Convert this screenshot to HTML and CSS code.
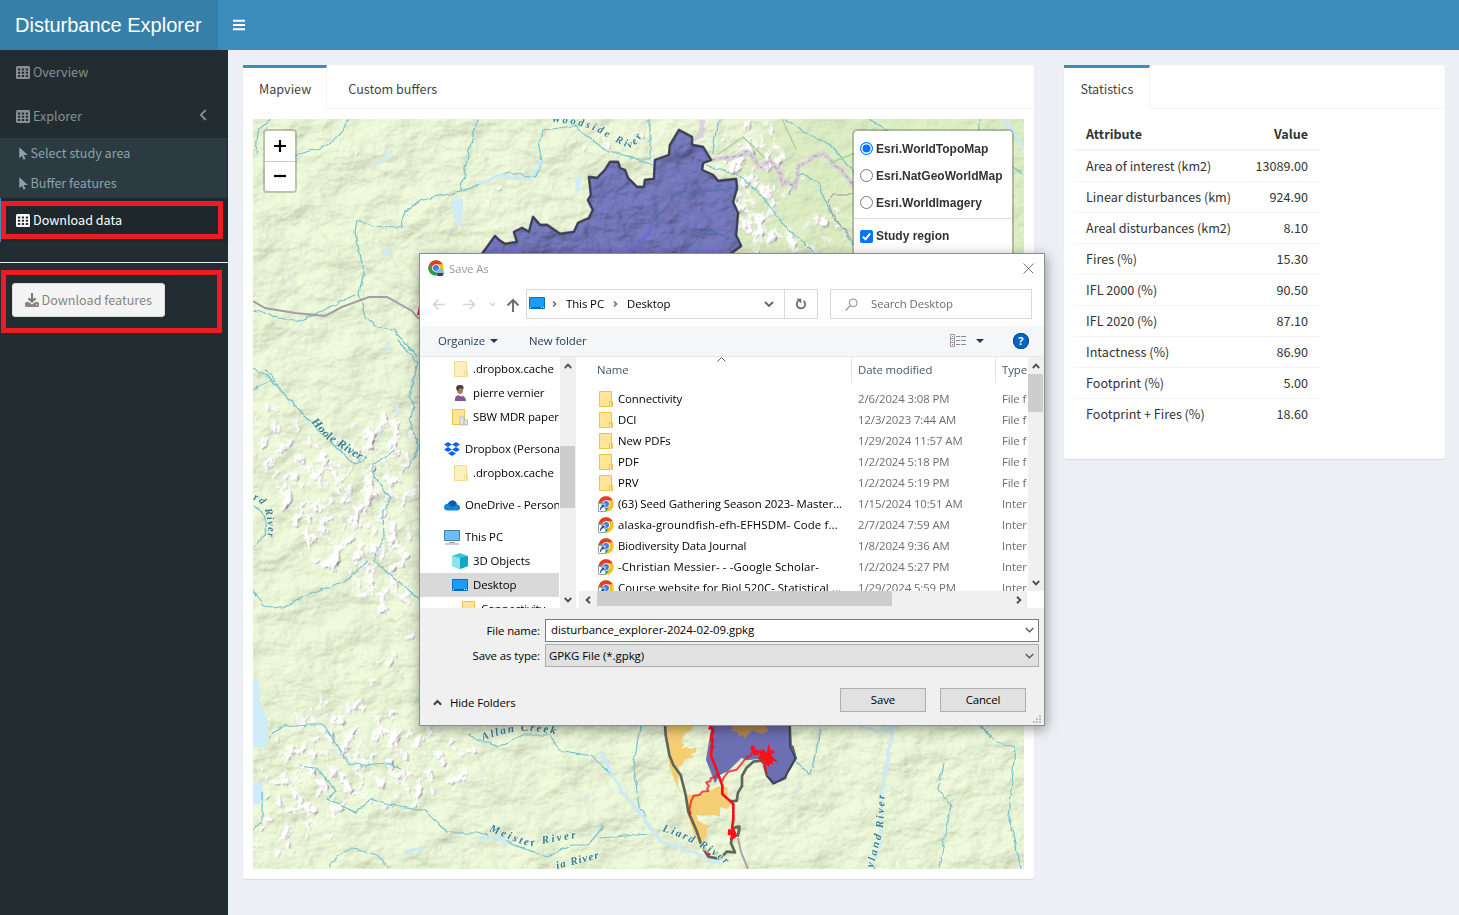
FILE: index.html
```html
<!DOCTYPE html>
<html lang="en">
<head>
<meta charset="utf-8">
<title>Disturbance Explorer</title>
<link rel="stylesheet" href="styles.css">
</head>
<body>
<svg class="defs" width="0" height="0">
  <defs>
    <symbol id="i-table" viewBox="0 0 14 13"><rect width="14" height="13" rx="1.5" fill="currentColor"/><path class="gridholes" d="M1.900 2.400h2.300v2H1.900zM5.800 2.400h2.300v2H5.800zM9.800 2.400h2.300v2H9.800zM1.900 5.700h2.300v2H1.900zM5.800 5.700h2.300v2H5.800zM9.800 5.700h2.300v2H9.800zM1.900 9h2.300v2H1.900zM5.800 9h2.300v2H5.800zM9.800 9h2.300v2H9.800z"/></symbol>
    <symbol id="i-pointer" viewBox="0 0 9 13"><path d="M.3.3v11l2.6-2.5 1.7 3.9 1.9-.8-1.7-3.8h4z" fill="currentColor"/></symbol>
    <symbol id="i-folder" viewBox="0 0 14 16"><path d="M.5.5h12v10h1v5H.5z" fill="#ffe594" stroke="#ecc44c"/><path d="M10.5 15.500v-5h2v5" fill="#ffefb8" stroke="#ecc44c"/></symbol>
    <symbol id="i-chrome" viewBox="0 0 48 48"><circle cx="24" cy="24" r="23" fill="#fbc116"/><path d="M4 12.500A23 23 0 0 0 24 47L34 30 24 24 14 30z" fill="#23a14a"/><path d="M4 12.500A23 23 0 0 1 44 12.500H24L14 29z" fill="#e53a2e"/><circle cx="24" cy="24" r="11.500" fill="#fff"/><circle cx="24" cy="24" r="9" fill="#3b7ded"/></symbol>
    <symbol id="i-link" viewBox="0 0 16 16"><use href="#i-chrome" width="16" height="16"/><path d="M.5 7.500h7v8h-7z" fill="#fff" stroke="#9aa3ad"/><path d="M2 14c0-3 1-4 2-4l-1-1.500h3.500V12L5.300 11C4 11.500 3 12.500 3 14z" fill="#1f56a5"/></symbol>
    <symbol id="i-desktop" viewBox="0 0 16 12"><path d="M.5.500h15v11H.5z" fill="#1e9cf5" stroke="#0a6fc0"/><path d="M1 10.500h14" stroke="#0a5c9f"/><path d="M1 10.500h1M12 10.500h1M14 10.500h1" stroke="#fff"/></symbol>
    <symbol id="i-up" viewBox="0 0 8 6"><path d="M.8 5 4 1.700 7.200 5" fill="none" stroke="currentColor" stroke-width="1.900"/></symbol>
    <symbol id="i-down" viewBox="0 0 10 6"><path d="M.8.800 5 5 9.200.800" fill="none" stroke="currentColor" stroke-width="1.400"/></symbol>
  </defs>
</svg>

<header class="topbar">
  <div class="logo">Disturbance Explorer</div>
  <div class="burger"><svg width="14" height="12"><path d="M1 1.800h12M1 6h12M1 10.200h12" stroke="#fff" stroke-width="2"/></svg></div>
</header>

<div class="wrap">
  <aside class="sidebar">
    <a class="item"><svg class="ic"><use href="#i-table"/></svg>Overview</a>
    <a class="item"><svg class="ic"><use href="#i-table"/></svg>Explorer<svg class="caret" width="8" height="12"><path d="M6.800 0 1.800 5l5 5" fill="none" stroke="currentColor" stroke-width="1.800"/></svg></a>
    <div class="sub">
      <a><svg class="ptr"><use href="#i-pointer"/></svg>Select study area</a>
      <a><svg class="ptr"><use href="#i-pointer"/></svg>Buffer features</a>
    </div>
    <a class="item active"><svg class="ic"><use href="#i-table"/></svg>Download data</a>
    <hr>
    <button class="dl"><svg width="14" height="14" viewBox="0 0 14 14"><path d="M7 0v8M3.500 5.200 7 8.700l3.500-3.500" fill="none" stroke="#777" stroke-width="2"/><path d="M1.500 9h2.200L7 11.500 10.300 9h2.200q1.500 0 1.500 1.500v2q0 1.500-1.500 1.500h-11Q0 14 0 12.500v-2Q0 9 1.500 9z" fill="#858585"/><circle cx="11.500" cy="11.500" r=".7" fill="#eee"/></svg>Download features</button>
    <div class="mark mark1"></div>
    <div class="mark mark2"></div>
  </aside>

  <main class="content">
    <section class="card mapcard">
      <nav class="tabs"><span class="tab on">Mapview</span><span class="tab">Custom buffers</span></nav>
      <div class="map">
        <svg class="mapsvg" viewBox="253 119 771 750">
          <defs>
            <filter id="relief" x="0" y="0" width="100%" height="100%" color-interpolation-filters="sRGB">
              <feTurbulence type="fractalNoise" baseFrequency=".022 .03" numOctaves="5" seed="8"/>
              <feColorMatrix values="0 0 0 0 0 0 0 0 0 0 0 0 0 0 0 1 0 0 0 0" result="h"/>
              <feDiffuseLighting in="h" surfaceScale="4" diffuseConstant="1.065" lighting-color="#eaf5d6"><feDistantLight azimuth="225" elevation="70"/></feDiffuseLighting>
            </filter>
            <filter id="hills" x="0" y="0" width="100%" height="100%" color-interpolation-filters="sRGB">
              <feTurbulence type="fractalNoise" baseFrequency=".035 .045" numOctaves="4" seed="5"/>
              <feColorMatrix values="0 0 0 0 0 0 0 0 0 0 0 0 0 0 0 1 0 0 0 0" result="h"/>
              <feDiffuseLighting in="h" surfaceScale="4" diffuseConstant="1.060" lighting-color="#7678bd"><feDistantLight azimuth="225" elevation="68"/></feDiffuseLighting>
            </filter>
            <filter id="snow" x="-5%" y="-5%" width="110%" height="110%" color-interpolation-filters="sRGB">
              <feGaussianBlur in="SourceAlpha" stdDeviation="12" result="b"/>
              <feTurbulence type="fractalNoise" baseFrequency=".085 .07" numOctaves="4" seed="21" result="n"/>
              <feColorMatrix in="n" values="0 0 0 0 0 0 0 0 0 0 0 0 0 0 0 1 0 0 0 0" result="h"/>
              <feComposite in="b" in2="h" operator="arithmetic" k1="0" k2=".45" k3="1" k4="-.86" result="m"/>
              <feComponentTransfer in="m" result="mask"><feFuncA type="linear" slope="6"/></feComponentTransfer>
              <feDiffuseLighting in="h" surfaceScale="3.200" diffuseConstant="1.160" lighting-color="#fffcf8" result="l"><feDistantLight azimuth="225" elevation="62"/></feDiffuseLighting>
              <feComposite in="l" in2="mask" operator="in"/>
            </filter>
            <filter id="rough" x="-5%" y="-5%" width="110%" height="110%"><feTurbulence type="fractalNoise" baseFrequency=".11" numOctaves="2" seed="3"/><feDisplacementMap in="SourceGraphic" scale="5" xChannelSelector="R" yChannelSelector="G"/></filter>
            <clipPath id="region"><use href="#upper"/></clipPath>
          </defs>
          <rect x="253" y="119" width="771" height="750" fill="#e6f2d3"/>
          <rect x="253" y="119" width="771" height="750" filter="url(#relief)" opacity=".65"/>
          <path d="M780 119h244v150H740l-20-90z" fill="#c3dda0" opacity=".35"/>
          <g filter="url(#snow)">
            <path d="M253 390l35 10 30 40 50-30 52-10v240l-60-30-60-50-47-90z" opacity=".9"/>
            <path d="M290 700l80-10 60 30 50 20-10 60-70 10-90 35-50 34h-7v-80z" opacity=".85"/>
            <path d="M700 185l45 0 60 45 35-40 15 63H700z M740 119h40l20 60-30 30-60-35z"/>
            <path d="M560 160l30-40h100v25l-40 20-50 10z M480 170h35v70h-40z M320 130h70v50h-70z" opacity=".6"/>
            <path d="M360 650l60-20v70l-60-20z M830 740h20v60h-20z M935 770h25v60h-25z M410 845h80v24h-80z" opacity=".75"/>
            <path d="M390 240h45v55h-45z M270 220h50v30h-50z" opacity=".5"/>
          </g>
          <g fill="#cfecfb">
            <path d="M253 679l6 2 1 20 8 20-2 26-13 0zM253 782h8l4 15-6 8-6-2z"/>
            <path d="M455 197l8 3-2 27-5-4-4-16zM374 165l19-17-2 7-16 12zM575 177h6l-1 12-4 6z"/>
            <path d="M382 253l10-10-4 12-6 3zM396 405l4 4-2 8-3-5zM378 442l6-12-1 8zM480 768l5 3 2 6zM586 795l4 3-2 6z"/>
            <path d="M390 680l4-4 3 2zM780 788l8-4-4 6zM795 790l8-8-5 10zM386 346l4-3v8l-3 1zM294 241l5 4-4-1zM288 276l10 1-7 2zM300 397l6-1-5 3zM352 370l3-2-2 2zM334 750l6 5-3 0zM297 667l4 4-1 4z"/>
          </g>
          <g filter="url(#rough)" fill="none" stroke-linejoin="round">
            <g stroke="#76c2cf" stroke-width="1.200">
              <path d="M349 119q-12 24-29 29l-25 7M478 119q-8 25-12 45l-6 28-26 5-15 4-13 10-5 16-30-1-14-6-2 12 9 40-5 20 6 25 10 9 20 6 22 24M253 310l25 8 22 3 40-19 18-8M460 192l20-8 30-12 25 6 7-15-4-22 6-11 30-4 30 23 26 8 35 12M253 368l13 7 40 42 15 16 35 32 10-9M398 340l20 23-9 32 6 15-6 9 9 25-2 12-12 16M396 450l-23 14 0 12 18 22-8 14 1 25-10 23 32 28 14 11M368 561l-25 22-38 13-22 12-20-2-10-16M253 505q18 10 12 30l-12 15"/>
              <path d="M268 737l13-10 30-2 13 0 24 38 15 2 25-2 13 5M300 766l16 2 20 23-9 8 28 13 16-13 17 6 38 6 20 22 32 0 24 7 45 17 25-12 16 0 15-18M468 735l30 12 25-12 27 0 9 15 32 6 22 20M328 869q10-20 25-20l25 6 10 14M253 830l9-8v-30"/>
              <path d="M600 838l50-4M641 725l-3 12-4 30 5 40 7 10M790 755l20 20 6-25 5-20M980 725l14 15 21 8-6 70 12 50M939 869l12-64-12-15 5-27"/>
              <path d="M719 119q-5 20-6 35M785 119l25 16 20 10 43 50M870 119l40 26M980 119l-5 25 48 30M706 165l35 12 20 18 23 30 33 30M790 195q5-35 28-12l10 25 30 42M650 119v40l-20 0M270 119l-12 12-2 22M253 390l22-10-10-10"/>
            </g>
            <g stroke="#cbe9f6" stroke-width="3.200">
              <path d="M480 184l20-8 30 3 12-18M600 750l20 40 25 30 15 20 40 15 20 8M893 725l-5 35-5 25-3 60-8 24M1004 119l20 30M480 838l18-1 10 8M405 853l20-6M860 727l20 5 12-5"/>
            </g>
            <path d="M703 119l-2 15-8 6M711 160l25-3 12-5 12 15 10-7 12 15v12l5-6 8 8 3-23 25-13 25 25 15 25" stroke="#d5c9d8" stroke-width="5" opacity=".8"/>
            <path d="M711 160l25-3 12-5 12 15 10-7 12 15v12l5-6 8 8 3-23 25-13 25 25 15 25" stroke="#a995b0" stroke-width="1" stroke-dasharray="4 3"/>
            <path d="M853 240l-20-24-5-14 5-8 22 0" stroke="#9a93a5" stroke-width="1"/>
          </g>
          <path d="M717 155l26-18 22 21M782 119l14 30M830 163l30-12" fill="none" stroke="#b3cf9c" stroke-width="1.500"/>
          <path d="M253 301l12 7 30 5 30 3 17-9 27-10h18l25 14 7 8" fill="none" stroke="#a39ea6" stroke-width="2"/>
          <path d="M738 838l3 14 7 17" fill="none" stroke="#aaa4ab" stroke-width="2"/>
          <path d="M417 315l3-13v13z" fill="#d72727"/>

          <path id="upper" d="M482 254l13-18 4 4 6 4 12-2-3-10 8-4 7 4 4-15 7 8h7l13 9 14-2 4-9 11-5 4-8-5-10 3-5-2-18 8 1 8-8 5-8h8l2 6 5 2 3 8 9 9 7 0 1-7 9-1 1-19 14-5 1-10 9-15 13 7v8l11 2 8 13-8 3-1 7 11 5 5 6 18-2 1 9-4 14 5 11-2 22 5 11-11 8z" fill="#7072b6"/>
          <g clip-path="url(#region)"><rect class="shade" x="480" y="125" width="265" height="135" filter="url(#hills)"/><path d="M654 222l8-10 12-16 8-4 24 0 32-5M683 253l15-15 15-7 25 11" fill="none" stroke="#4e75b4" stroke-width="1.200"/><path d="M630 253l22-24" stroke="#6a6cd0" stroke-width="3"/></g>
          <path class="outline" d="M482 254l13-18 4 4 6 4 12-2-3-10 8-4 7 4 4-15 7 8h7l13 9 14-2 4-9 11-5 4-8-5-10 3-5-2-18 8 1 8-8 5-8h8l2 6 5 2 3 8 9 9 7 0 1-7 9-1 1-19 14-5 1-10 9-15 13 7v8l11 2 8 13-8 3-1 7 11 5 5 6 18-2 1 9-4 14 5 11-2 22 5 11-11 8"/>
          <path class="outline in" d="M482 254l13-18 4 4 6 4 12-2-3-10 8-4 7 4 4-15 7 8h7l13 9 14-2 4-9 11-5 4-8-5-10 3-5-2-18 8 1 8-8 5-8h8l2 6 5 2 3 8 9 9 7 0 1-7 9-1 1-19 14-5 1-10 9-15 13 7v8l11 2 8 13-8 3-1 7 11 5 5 6 18-2 1 9-4 14 5 11-2 22 5 11-11 8"/>

          <g transform="translate(600 715) scale(.33333)">
            <path d="M335 28h233l2 65 17 38-15 30-17 28-34 16-21-25-8-30-17-18-35 4 -15-8-40 40-25 12-15 25-15-40-12-30z" fill="#6d6fb3"/>
            <path d="M388 28h110l8 20-20 8-30-10-20 24-12-10-8 5-2-15-22-3 8-7z" fill="#b28552"/>
            <path d="M195 28h85l-5 18-20 10-12 22 10 12-8 10 15-4 10 6 20-5-2 15-15 5 8 10-25 6-10 18-10 3-2 60 15 26-15-20-26-65-5-80zM257 240l50-3 25-10 20-12h30l2 25-6 5 12 22-5 15-25-5v28l-20-5-30 2-20-2 2 15 15 10 15 5-2 35-12 15 20 35-10 5-35-60-20-60z" fill="#f5cd73"/>
            <path d="M195 28l2 32 11 60 12 30 22 30 15 60 8 50 25 58 15 45 20 32 35 7 20-22 25 2-12-27 7-45 18-5-5 30M390 258l20 0 4-25 12-20 0-30 14-25 20-18 30-4M492 150l8 30 20 25 35-15 5-15 27-45-10-35-5 0-3-67" fill="none" stroke="#5f6659" stroke-width="8" stroke-linejoin="round"/>
            <path d="M500 183l22 22 33-18 31-57-17-37v-65" fill="none" stroke="#35357f" stroke-width="4"/>
            <g fill="none" stroke="#f50f18" stroke-linejoin="round">
              <path d="M328 28l12 20-6 14 3 20-4 40 16 40 18 50 0 25 33 30 0 45-4 30" stroke-width="8"/>
              <path d="M325 40l15 0M330 75l12 0M332 96l11 0" stroke-width="7"/>
              <path d="M355 177l-12 10-10 2-2 10-12 3 8 12-6 6 4 8-18 2-8 10-18 2-8 18-5 25 5 12M367 200l4-12 14-18 25-6 15-18 13-17 15-8 8-25 8 15 20-5 5 15 30-10M500 175l-4-20-20-30" stroke-width="6" opacity=".75"/>
              <path d="M320 408l10 12" stroke-width="7"/>
            </g>
            <path d="M450 95l12-5 2 15 22 3 4-5 10 12 6-30 5 20 12 0-10 12 2 5 20 20-18-5 2 12-10-3-2 9-13-8-5-12-15-6 8-12-20 5zM384 343l20 0 8 20-10 8-13 5 4-15-10 0z" fill="#fb1118"/>
            <path d="M400 340q20-14 18 8l-5 12" fill="none" stroke="#66695f" stroke-width="7"/>
          </g>
          <g class="maplabels">
            <path id="t1" d="M551 122q32 1 54 14t27 11q8-3 16-24v-20" fill="none"/><text font-size="10.500" letter-spacing="2.600"><textPath href="#t1">Woodside River</textPath></text>
            <path id="t2" d="M311 422l14 16 33 21 20 12" fill="none"/><text font-size="12" letter-spacing=".3"><textPath href="#t2">Hoole River</textPath></text>
            <path id="t3" d="M253 500q18 2 14 44l-2 20" fill="none"/><text font-size="10.500" letter-spacing="1.200"><textPath href="#t3">rd River</textPath></text>
            <path id="t4" d="M483 741q38-17 78-5l20 6" fill="none"/><text font-size="11" letter-spacing="1.900"><textPath href="#t4">Allan Creek</textPath></text>
            <path id="t5" d="M489 831l22 9q18 8 25 5l40-7 20 0" fill="none"/><text font-size="11" letter-spacing="2.400"><textPath href="#t5">Meister River</textPath></text>
            <path id="t6" d="M557 869l47-12 20-5" fill="none"/><text font-size="11" letter-spacing="1.100"><textPath href="#t6">ia River</textPath></text>
            <path id="t7" d="M662 831q38 12 64 34l20 20" fill="none"/><text font-size="11" letter-spacing="2"><textPath href="#t7">Liard River</textPath></text>
            <path id="t8" d="M873 868l10-38 3-60" fill="none"/><text font-size="11" letter-spacing="2.200"><textPath href="#t8">yland River</textPath></text>
          </g>
        </svg>
        <div class="zoomctl"><span><svg width="12" height="12"><path d="M6 0v12M0 6h12" stroke="#000" stroke-width="2.200"/></svg></span><span><svg width="12" height="12"><path d="M0 5h12" stroke="#000" stroke-width="2.200"/></svg></span></div>
        <div class="layers">
          <label><i class="radio sel"></i>Esri.WorldTopoMap</label>
          <label><i class="radio"></i>Esri.NatGeoWorldMap</label>
          <label><i class="radio"></i>Esri.WorldImagery</label>
          <label class="ov"><svg width="13" height="13"><rect width="13" height="13" rx="2" fill="#0075ff"/><path d="M2.800 6.600l2.700 2.800 4.700-6" fill="none" stroke="#fff" stroke-width="1.900"/></svg>Study region</label>
        </div>
      </div>
    </section>
    <section class="card statcard">
      <nav class="tabs"><span class="tab on">Statistics</span></nav>
      <table class="stats">
        <thead><tr><th>Attribute</th><th>Value</th></tr></thead>
        <tbody>
        <tr><td>Area of interest (km2)</td><td>13089.00</td></tr>
        <tr><td>Linear disturbances (km)</td><td>924.90</td></tr>
        <tr><td>Areal disturbances (km2)</td><td>8.10</td></tr>
        <tr><td>Fires (%)</td><td>15.30</td></tr>
        <tr><td>IFL 2000 (%)</td><td>90.50</td></tr>
        <tr><td>IFL 2020 (%)</td><td>87.10</td></tr>
        <tr><td>Intactness (%)</td><td>86.90</td></tr>
        <tr><td>Footprint (%)</td><td>5.00</td></tr>
        <tr><td>Footprint + Fires (%)</td><td>18.60</td></tr>
        </tbody>
      </table>
    </section>
  </main>
</div>

<div class="dialog">
  <div class="dtitle">
    <svg width="17" height="17" viewBox="0 0 17 17"><use href="#i-chrome" width="16" height="16"/><circle cx="12" cy="12.500" r="4" fill="#8db8d8"/><path d="M8.500 13h7l-1 3h-5z" fill="#4a4433"/></svg>
    <span>Save As</span>
    <svg class="close" width="11" height="11"><path d="M.5.500l10 10M10.500.500l-10 10" stroke="#777" stroke-width="1"/></svg>
  </div>
  <div class="dnav">
    <svg class="arrows" width="88" height="16"><g fill="none" stroke="#d4d4d4" stroke-width="1.500"><path d="M1.500 7.500H13M6.500 2.500l-5 5 5 5M31 7.500h11.500M37.500 2.500l5 5-5 5"/><path d="M58 6l2.500 2.500L63 6"/></g><path d="M81 15V3M75.500 8.500 81 3 86.500 8.500" fill="none" stroke="#707070" stroke-width="2"/></svg>
    <div class="addr">
      <svg class="desk" width="16" height="12"><use href="#i-desktop"/></svg>
      <svg class="sep" width="5" height="8"><path d="M1 1.500 3.500 4 1 6.500" fill="none" stroke="#666" stroke-width="1.500"/></svg>
      <span>This PC</span>
      <svg class="sep" width="5" height="8"><path d="M1 1.500 3.500 4 1 6.500" fill="none" stroke="#666" stroke-width="1.500"/></svg>
      <span>Desktop</span>
      <svg class="drop" width="10" height="6"><path d="M1 1l4 4 4-4" fill="none" stroke="#666" stroke-width="1.900"/></svg>
    </div>
    <div class="reload"><svg width="12" height="12"><path d="M3.300 3A4.200 4.200 0 1 0 8.500 2.900" fill="none" stroke="#666" stroke-width="1.700"/><path d="M1.500.800h4.700v4.700z" fill="#666"/></svg></div>
    <div class="search"><svg width="13" height="13"><circle cx="8.200" cy="4.800" r="3.900" fill="none" stroke="#888"/><path d="M5.400 7.600.700 12.300" stroke="#888" stroke-width="1.200"/></svg>Search Desktop</div>
  </div>
  <div class="dtool">
    <span>Organize</span><i class="tri"></i><span class="newf">New folder</span>
    <svg class="view" width="17" height="14"><path d="M.5.500h4v12h-4zM.5 4.500h4M.5 8.500h4" fill="#fff" stroke="#999"/><path d="M2 2.500h1M2 6.500h1" stroke="#3b83c9"/><path d="M2 10.500h1" stroke="#d33"/><path d="M6 2.500h4m1 0h5M6 6.500h4m1 0h5M6 10.500h4m1 0h5" stroke="#8b8b8b"/></svg>
    <i class="tri"></i>
    <span class="help">?</span>
  </div>
  <div class="dmain">
    <div class="tree">
      <div class="node l2"><svg class="fold pale"><use href="#i-folder"/></svg>.dropbox.cache</div>
      <div class="node l2"><svg class="pic" viewBox="0 0 16 16"><path d="M3 16q-1-6 5-6 6 1 6 6z" fill="#87578c"/><path d="M5 9l4-1 1 4z" fill="#fff"/><ellipse cx="8" cy="5" rx="3" ry="4" fill="#a77b5b"/><path d="M4.500 5Q3 0 8 0q4 0 3.500 4l-4-1-1.500 3z" fill="#443d3b"/></svg>pierre vernier</div>
      <div class="node l2"><svg class="pic" viewBox="0 0 16 16"><path d="M.5.500h12v15H.5z" fill="#ffe594" stroke="#ecc44c"/><path d="M8 8h4v8H8zM12 11h3.500v5H12z" fill="#e6e6e6" stroke="#bbb"/></svg>SBW MDR paper</div>
      <div class="node l0 gap"><svg class="pic" viewBox="0 0 16 14"><path d="M4 0l4 2.500L4 5 0 2.500zM12 0l4 2.500L12 5 8 2.500zM4 5l4 2.500L4 10 0 7.500zM12 5l4 2.500-4 2.500-4-2.500zM8 9l4 2.500L8 14l-4-2.500z" fill="#0a62f5"/></svg>Dropbox (Personal)</div>
      <div class="node l2"><svg class="fold pale"><use href="#i-folder"/></svg>.dropbox.cache</div>
      <div class="node l0 gap"><svg class="pic" viewBox="0 0 16 12"><path d="M3 11.500Q0 11 0 8t4-3.500Q6 1 9 1.500t4 4Q16 6 16 8.700t-3 2.800z" fill="#1583d8"/><path d="M4 4.500Q6 1 9 1.500t4 4L8 8z" fill="#0b5cad"/></svg>OneDrive - Personal</div>
      <div class="node l0 gap"><svg class="pic" viewBox="0 0 16 16"><path d="M.5 1.500h15v10H.5z" fill="#69c0f7" stroke="#4a7ba5"/><path d="M5 13.500h6M1 15h14" stroke="#8ba1b3"/></svg>This PC</div>
      <div class="node l1"><svg class="pic" viewBox="0 0 16 16"><path d="M0 3l8-3 8 3v10l-8 3-8-3z" fill="#37c3d8"/><path d="M0 3l8 2v11l-8-3z" fill="#8be3ec"/><path d="M8 5l8-2v10l-8 3z" fill="#0ca9c4"/></svg>3D Objects</div>
      <div class="node l1 cur"><svg class="deskic"><use href="#i-desktop"/></svg>Desktop</div>
      <div class="node l3"><svg class="fold"><use href="#i-folder"/></svg>Connectivity</div>
    </div>
    <div class="vs vs1"><svg class="up"><use href="#i-up"/></svg><i></i><svg class="dn"><use href="#i-up"/></svg></div>
    <div class="pane">
      <div class="files">
        <div class="list">
          <div class="lh"><b>Name</b><b>Date modified</b><b>Type</b><svg width="9" height="5"><path d="M.5 4.500l4-4 4 4" fill="none" stroke="#666"/></svg></div>
          <div class="row"><span><svg class="fold"><use href="#i-folder"/></svg>Connectivity</span><em>2/6/2024 3:08 PM</em><em>File f</em></div>
          <div class="row"><span><svg class="fold"><use href="#i-folder"/></svg>DCI</span><em>12/3/2023 7:44 AM</em><em>File f</em></div>
          <div class="row"><span><svg class="fold"><use href="#i-folder"/></svg>New PDFs</span><em>1/29/2024 11:57 AM</em><em>File f</em></div>
          <div class="row"><span><svg class="fold"><use href="#i-folder"/></svg>PDF</span><em>1/2/2024 5:18 PM</em><em>File f</em></div>
          <div class="row"><span><svg class="fold"><use href="#i-folder"/></svg>PRV</span><em>1/2/2024 5:19 PM</em><em>File f</em></div>
          <div class="row"><span><svg class="lnk"><use href="#i-link"/></svg>(63) Seed Gathering Season 2023- Master...</span><em>1/15/2024 10:51 AM</em><em>Inter</em></div>
          <div class="row wide"><span><svg class="lnk"><use href="#i-link"/></svg>alaska-groundfish-efh-EFHSDM- Code f...</span><em>2/7/2024 7:59 AM</em><em>Inter</em></div>
          <div class="row"><span><svg class="lnk"><use href="#i-link"/></svg>Biodiversity Data Journal</span><em>1/8/2024 9:36 AM</em><em>Inter</em></div>
          <div class="row wide"><span><svg class="lnk"><use href="#i-link"/></svg>-Christian Messier- - -Google Scholar-</span><em>1/2/2024 5:27 PM</em><em>Inter</em></div>
          <div class="row mid"><span><svg class="lnk"><use href="#i-link"/></svg>Course website for Biol 520C- Statistical ...</span><em>1/29/2024 5:59 PM</em><em>Inter</em></div>
        </div>
        <div class="vs vs2"><svg class="up"><use href="#i-up"/></svg><i></i><svg class="dn"><use href="#i-up"/></svg></div>
      </div>
      <div class="hs"><svg class="lf"><use href="#i-up"/></svg><i></i><svg class="rt"><use href="#i-up"/></svg></div>
    </div>
  </div>
  <div class="dfoot">
    <div class="frow"><label>File name:</label><div class="fld name">disturbance_explorer-2024-02-09.gpkg<svg><use href="#i-down"/></svg></div></div>
    <div class="frow"><label>Save as type:</label><div class="fld type">GPKG File (*.gpkg)<svg><use href="#i-down"/></svg></div></div>
    <div class="acts"><svg class="hid"><use href="#i-up"/></svg><span>Hide Folders</span><button>Save</button><button>Cancel</button></div>
    <svg class="grip" width="8" height="8"><path d="M6 0h2v2H6zM3 3h2v2H3zM6 3h2v2H6zM0 6h2v2H0zM3 6h2v2H3zM6 6h2v2H6z" fill="#bdbdbd"/></svg>
  </div>
</div>
</body>
</html>
```
FILE: styles.css
```css
* { box-sizing: border-box; }
body { margin: 0; width: 1459px; height: 915px; overflow: hidden; background: #ecf0f5; color: #333; font: 12.6px/20px "Noto Sans CJK SC", sans-serif; position: relative; }
svg { display: block; flex: none; overflow: visible; }
.defs { position: absolute; }
.topbar { height: 50px; display: flex; background: #3c8dbc; color: #fff; }
.logo { width: 218px; background: #367fa9; font: 20px/50px "Liberation Sans", sans-serif; padding-left: 15px; white-space: nowrap; }
.burger { padding: 19px 14px; }
.wrap { display: flex; height: 865px; }
.sidebar { width: 228px; background: #222d32; position: relative; color: #8a8f91; }
.item { display: flex; align-items: center; height: 44px; padding-left: 16px; gap: 3px; }
.ic { width: 14px; height: 13px; }
.gridholes { fill: #222d32; }
.caret { margin-left: auto; margin-right: 21px; margin-top: -1px; }
.sub { background: #2c3b41; margin-right: 1px; color: #8aa4af; }
.sub a { display: flex; align-items: center; height: 30px; padding-left: 19px; gap: 2.5px; }
.ptr { width: 9px; height: 13px; }
.active { background: #1e282c; color: #fff; box-shadow: inset 1px 0 #3c8dbc; }
hr { border: 0; height: 1px; background: #eee; margin: 20px 0; }
.dl { width: 153px; height: 34px; margin-left: 12px; border: 1px solid #ddd; border-radius: 3px; background: #f4f4f4; color: #858585; font: inherit; display: flex; align-items: center; gap: 2.5px; padding: 0 12px; white-space: nowrap; }
.mark { position: absolute; border: 5px solid #ed1c24; }
.mark1 { left: 1px; top: 151px; width: 222px; height: 38px; }
.mark2 { left: 1px; top: 220px; width: 221px; height: 63px; }
.content { flex: 1; padding: 15px 14px 0 15px; display: flex; gap: 30px; align-items: flex-start; }
.card { background: #fff; border-radius: 3px; box-shadow: 0 1px 1px rgba(0,0,0,.1); }
.mapcard { width: 791px; height: 814px; }
.statcard { width: 381px; height: 394px; }
.tabs { display: flex; height: 44px; border-bottom: 1px solid #f4f4f4; color: #444; }
.tab { height: 43px; padding: 14px 15px 0 21px; white-space: nowrap; }
.tab.on { height: 44px; border-top: 3px solid #3c8dbc; border-right: 1px solid #f4f4f4; background: #fff; padding: 11px 15px 0 16px; }
.statcard .tab.on { width: 86px; padding-left: 16.5px; }
.map { position: relative; margin: 10px; height: 750px; }
.mapsvg { width: 771px; height: 750px; overflow: hidden; }
.maplabels text { font-family: "Liberation Serif", serif; font-style: italic; fill: #367f92; stroke: #eef6e0; stroke-width: 1.5px; paint-order: stroke; font-weight: bold; }
.shade { opacity: .8; }
.outline { fill: none; stroke: #5a6052; stroke-width: 2.8px; stroke-linejoin: round; }
.outline.in { stroke: #333477; stroke-width: 1.3px; }
.zoomctl { position: absolute; left: 10px; top: 10px; width: 34px; height: 64px; border: 2px solid rgba(0,0,0,.2); border-radius: 4px; background-clip: padding-box; background-color: #fff; }
.zoomctl span { display: flex; align-items: center; justify-content: center; height: 30px; }
.zoomctl span + span { border-top: 1px solid #ccc; }
.layers { position: absolute; left: 599px; top: 10px; width: 162px; height: 170px; background-color: #fff; background-clip: padding-box; border: 2px solid rgba(0,0,0,.2); border-radius: 5px; font: bold 12px/27px "Liberation Sans", sans-serif; padding-top: 5px; }
.layers label { display: flex; align-items: center; height: 27px; padding-left: 6px; gap: 3px; }
.layers .ov { border-top: 1px solid #ddd; margin-top: 1px; height: 36px; }
.layers .ov svg { margin-top: -1px; }
.radio { width: 13px; height: 13px; margin-top: -2px; border: 1px solid #767676; border-radius: 50%; }
.radio.sel { border: 1.5px solid #0075ff; background: #0075ff; box-shadow: inset 0 0 0 1.5px #fff; }
.stats { border-collapse: collapse; margin: 9px 10px; width: 246px; }
.stats th, .stats td { text-align: left; padding: 5px 12px; height: 31px; border-bottom: 1px solid #f4f4f4; white-space: nowrap; line-height: 20px; }
.stats th { border-bottom-width: 2px; height: 32px; }
.stats th:last-child, .stats td:last-child { text-align: right; }
.stats tr:last-child td { border-bottom: 0; }
.dialog { position: absolute; left: 419px; top: 253px; width: 626px; height: 473px; border: 1px solid #8b8d8f; background: #fff; box-shadow: 1px 3px 12px rgba(0,0,0,.4); font: 11.4px/16px "Open Sans", sans-serif; letter-spacing: -.08px; color: #000; }
.dtitle { height: 29px; display: flex; align-items: center; gap: 4px; padding: 0 10px 0 8px; color: #999; }
.close { margin-left: auto; }
.dnav { height: 43px; display: flex; padding: 6px 12px 7px 12px; }
.arrows { margin: 8px 6px 0 0; }
.addr { width: 259px; border: 1px solid #d9d9d9; display: flex; align-items: center; padding-left: 2px; gap: 8px; }
.desk { margin-top: -2px; margin-right: -1px; }
.addr span { margin-left: 1px; }
.addr .sep + span { margin-right: 1px; }
.drop { margin-left: auto; margin-right: 10px; }
.reload { width: 33px; border: 1px solid #d9d9d9; border-left: 0; margin-right: 12px; display: flex; align-items: center; justify-content: center; }
.search { flex: 1; border: 1px solid #d9d9d9; display: flex; align-items: center; padding-left: 14px; gap: 13px; color: #6b6b6b; }
.dtool { height: 31px; background: #f5f6f8; border-bottom: 1px solid #e6e7e9; display: flex; align-items: center; padding: 0 15px 0 18px; color: #1e395b; }
.tri { border: 4px solid transparent; border-top-color: #1e395b; border-bottom: 0; margin-left: 5px; }
.newf { margin-left: 31px; }
.view { margin-left: auto; margin-right: 4px; }
.help { width: 16px; height: 16px; border-radius: 50%; background: #0566c8; color: #fff; font-weight: bold; text-align: center; margin-left: 29px; box-shadow: inset 0 0 0 1px #064b92; }
.dmain { height: 251px; display: flex; overflow: hidden; }
.tree { width: 139px; overflow: hidden; }
.node { height: 24px; display: flex; align-items: center; gap: 5px; white-space: nowrap; }
.gap { margin-top: 8px; }
.l0 { padding-left: 24px; } .l1, .l2 { padding-left: 32px; } .l3 { padding-left: 40px; }
.cur { background: #d9d9d9; }
.pic { width: 16px; height: 16px; }
.deskic { width: 16px; height: 12px; }
.fold { width: 14px; height: 16px; margin: 0 0 0 2px; }
.pale { opacity: .6; }
.lnk { width: 16px; height: 16px; }
.vs { width: 16px; background: #f0f0f0; color: #505050; display: flex; flex-direction: column; align-items: center; }
.vs i, .hs i { background: #cdcdcd; }
.vs svg, .hs svg { width: 8px; height: 6px; }
.vs1 { margin-left: 1px; padding-right: 1px; }
.vs1 i { width: 15px; height: 62px; margin-top: 77px; }
.vs svg.up { margin-top: 6px; }
.vs svg.dn { margin-top: auto; margin-bottom: 5px; transform: rotate(180deg); }
.pane { flex: 1; margin-left: 3px; overflow: hidden; }
.files { height: 234px; display: flex; }
.list { flex: 1; overflow: hidden; }
.lh { display: grid; grid-template-columns: 272px 144px 40px; height: 31px; position: relative; }
.lh b { font-weight: normal; color: #44566f; line-height: 26px; height: 26px; padding-left: 6px; border-left: 1px solid #e5e5e5; }
.lh b:first-child { padding-left: 18px; border-left: 0; }
.lh svg { position: absolute; left: 138px; top: 0; }
.row { display: grid; grid-template-columns: 272px 144px 40px; height: 21px; align-items: center; white-space: nowrap; }
.row span { display: flex; align-items: center; gap: 4px; padding-left: 19px; }
.row.wide span { letter-spacing: .14px; }
.row.mid span { letter-spacing: .03px; }
.row em { font-style: normal; color: #6d6d6d; padding-left: 7px; letter-spacing: -.1px; }
.row .fold { margin: 0 1px; }
.vs2 { padding-right: 1px; }
.vs2 i { width: 15px; height: 38px; margin-top: 5px; }
.vs2 svg.dn { margin-bottom: 5px; }
.hs { height: 17px; margin-right: 17px; background: #f0f0f0; display: flex; align-items: center; padding: 0 4px 0 5px; color: #505050; }
.hs i { height: 15px; width: 295px; margin: -2px 0 0 5px; }
.lf { transform: rotate(-90deg); }
.rt { transform: rotate(90deg); margin-left: auto; }
.dfoot { height: 117px; background: #f0f0f0; padding: 11px 5px 0 0; position: relative; }
.frow { display: flex; margin-bottom: 2px; }
.frow label { width: 125px; padding-right: 5px; text-align: right; line-height: 23px; }
.fld { flex: 1; height: 23px; border: 1px solid #7a7a7a; background: #fff; padding-left: 5px; line-height: 20px; display: flex; align-items: center; justify-content: space-between; padding-right: 4px; }
.name { padding-bottom: 1px; letter-spacing: -.03px; }
.fld svg { width: 9px; height: 6px; color: #555; }
.type { background: #e1e1e1; border-color: #adadad; padding-left: 3px; letter-spacing: -.03px; }
.acts { display: flex; align-items: center; margin-top: 21px; height: 24px; padding-right: 13px; padding-left: 13px; }
.hid { width: 9px; height: 7px; color: #444; margin-top: 4px; }
.acts span { margin: 6px auto 0 8px; }
.acts button { width: 86px; height: 24px; border: 1px solid #adadad; background: #e1e1e1; font: inherit; letter-spacing: inherit; padding: 0; margin-left: 14px; }
.grip { position: absolute; right: 3px; bottom: 2px; }
```
